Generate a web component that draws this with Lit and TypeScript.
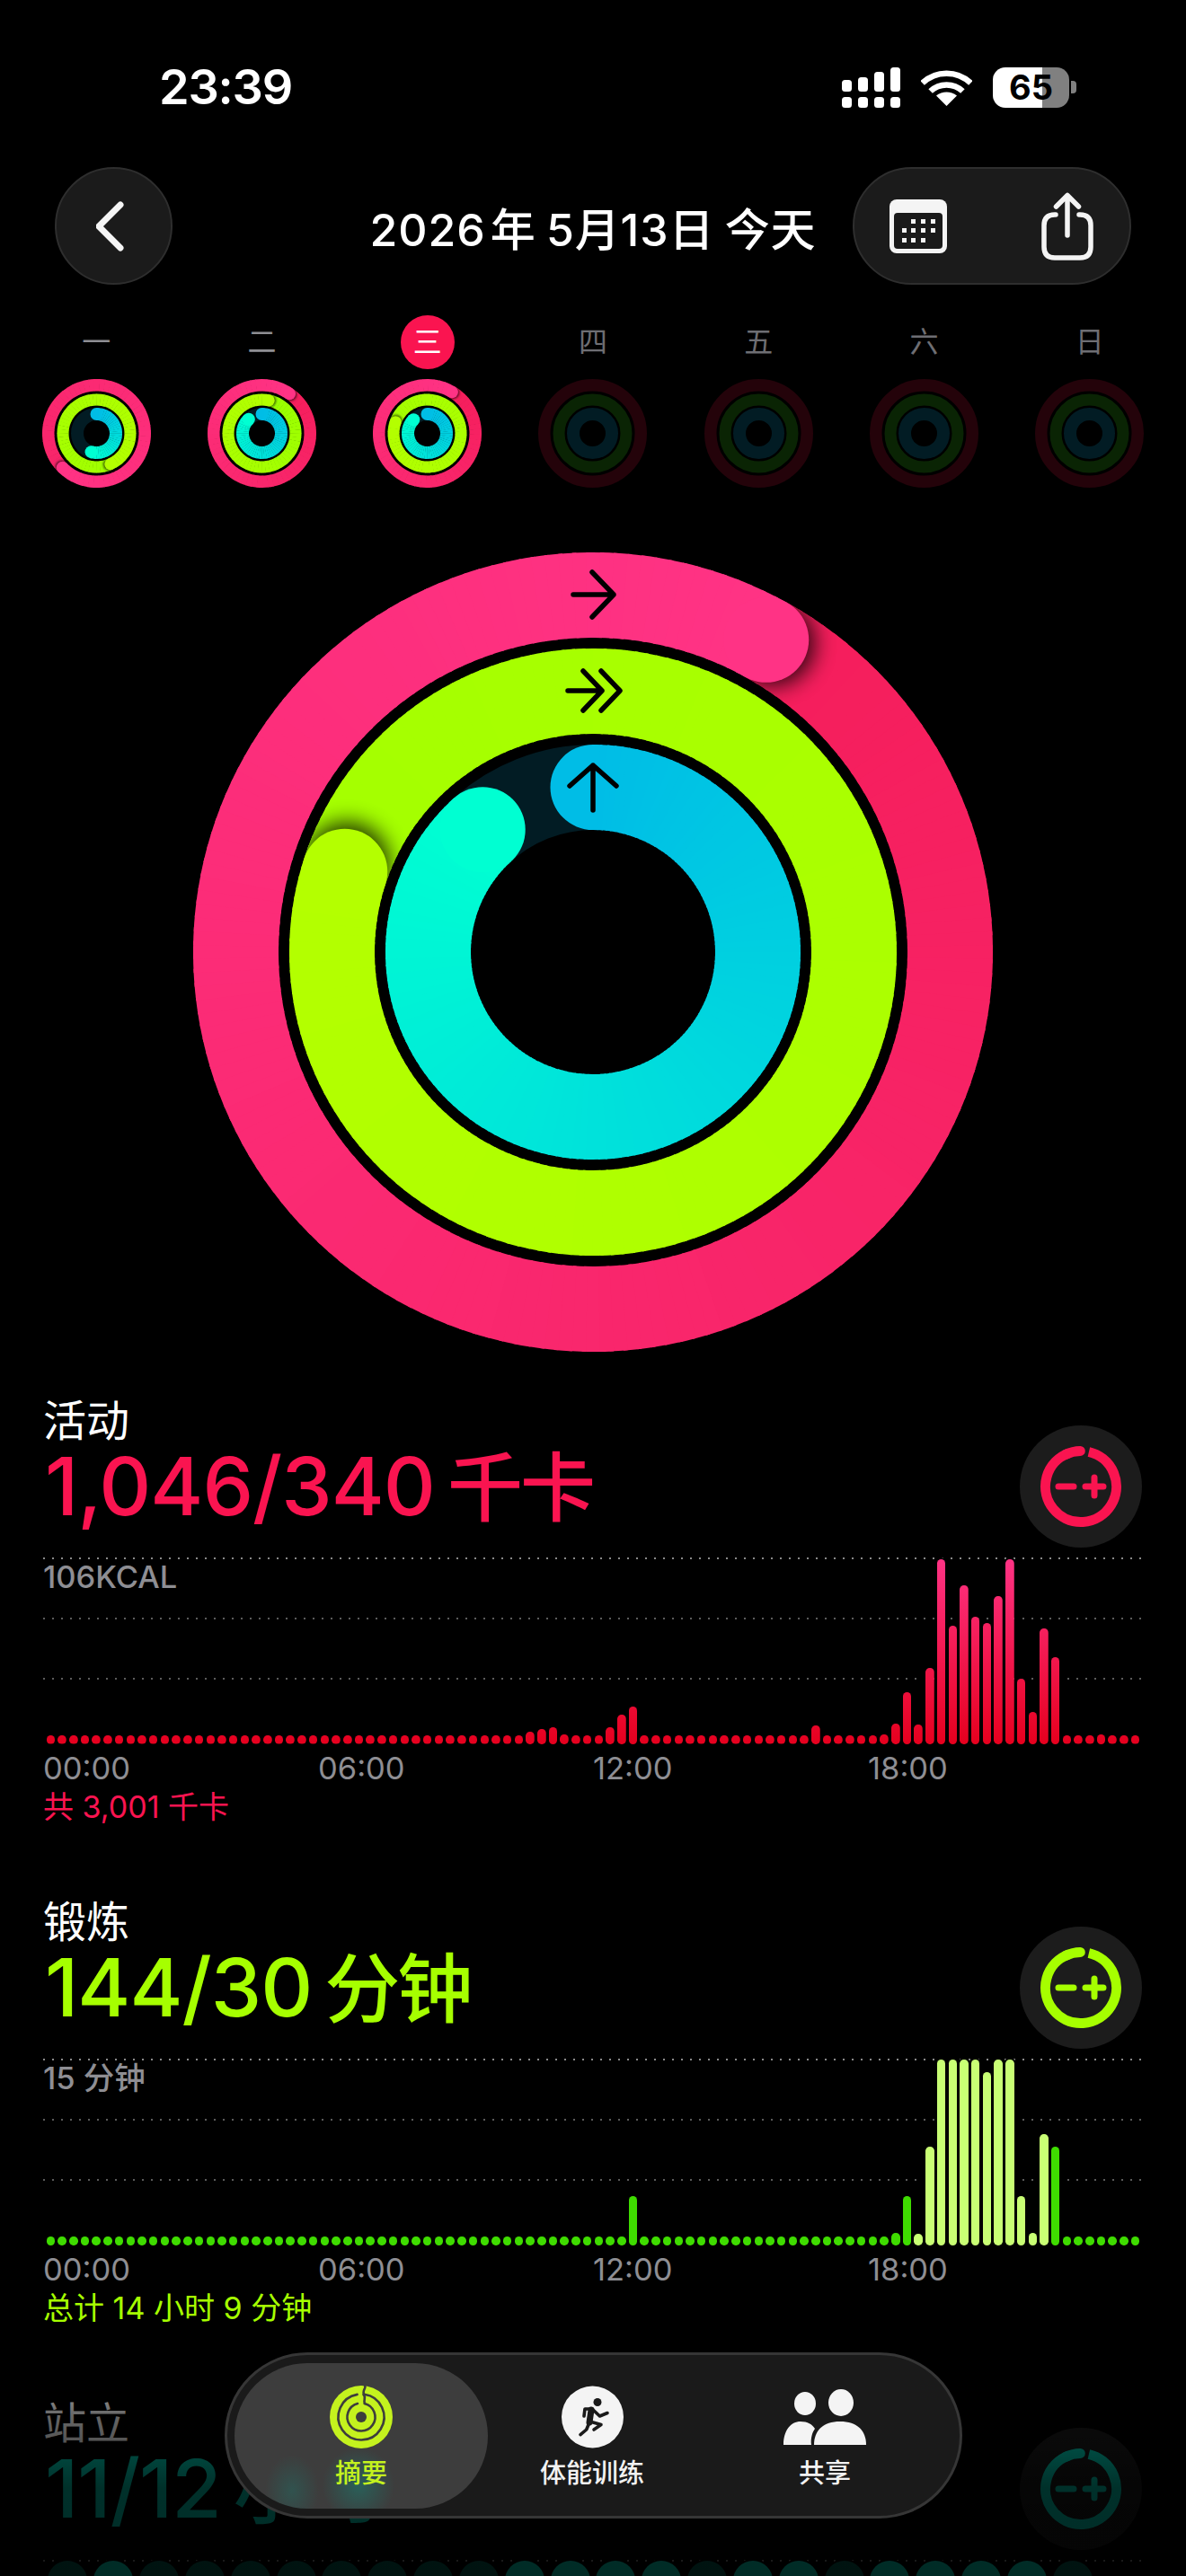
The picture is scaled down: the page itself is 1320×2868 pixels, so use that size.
import { LitElement, css, html, svg } from 'lit';
import { customElement, property } from 'lit/decorators.js';

type Ring = { r: number; w: number; from: string; to: string; track: string; angle: number };
type Bar = { h: number; tone: string };

const RED = { from: '#f41c58', to: '#ff3385', track: '#24030a' };
const GREEN = { from: '#98ff00', to: '#b4ff00', track: '#0a2404' };
const CYAN = { from: '#00bde6', to: '#00ffd2', track: '#021c24' };

const pt = (c: number, r: number, a: number) => {
  const t = ((a - 90) * Math.PI) / 180;
  return [c + r * Math.cos(t), c + r * Math.sin(t)];
};

const arc = (c: number, r: number, a0: number, a1: number) => {
  const [x0, y0] = pt(c, r, a0);
  const [x1, y1] = pt(c, r, a1);
  return `M${x0} ${y0}A${r} ${r} 0 ${a1 - a0 > 180 ? 1 : 0} 1 ${x1} ${y1}`;
};

const mix = (a: string, b: string, t: number) => {
  const ch = (s: string, i: number) => parseInt(s.slice(i, i + 2), 16);
  const part = (i: number) => Math.round(ch(a, i) + (ch(b, i) - ch(a, i)) * t);
  return `rgb(${part(1)},${part(3)},${part(5)})`;
};

const miniRings = (red: number, green: number, cyan: number): Ring[] => [
  { r: 53.75, w: 13.5, ...RED, angle: red },
  { r: 37.5, w: 13, ...GREEN, angle: green },
  { r: 21.5, w: 14, ...CYAN, angle: cyan },
];

const bigRings: Ring[] = [
  { r: 397.5, w: 95, ...RED, angle: 389 },
  { r: 290.5, w: 95, ...GREEN, angle: 648 },
  { r: 183.5, w: 95, ...CYAN, angle: 318 },
];

@customElement('activity-rings')
class ActivityRings extends LitElement {
  static styles = css`
    :host {
      display: block;
    }
    svg {
      display: block;
    }
  `;

  @property({ type: Number }) size = 121;
  @property({ attribute: false }) rings: Ring[] = [];

  renderRing(ring: Ring, i: number, c: number, step: number) {
    const { r, w, from, to, track, angle } = ring;
    const parts = [];
    parts.push(svg`<circle cx=${c} cy=${c} r=${r} fill="none" stroke=${track} stroke-width=${w} />`);
    if (angle === 0) return parts;

    const scale = w / 95;
    const lastLap = Math.max(0, angle - 360);
    const split = angle - 40;
    const seg = (a: number) => svg`<path d=${arc(c, r, a, Math.min(a + step + 0.6, angle))} fill="none"
      stroke=${mix(from, to, a / angle)} stroke-width=${w} />`;

    if (angle < 360) {
      const [sx, sy] = pt(c, r, 0);
      parts.push(svg`<circle cx=${sx} cy=${sy} r=${w / 2} fill=${from} />`);
    }
    for (let a = lastLap; a < split; a += step) parts.push(seg(a));

    if (angle >= 360) {
      const outer = r + w / 2;
      const inner = r - w / 2;
      const hoop = (q: number) => `M${c - q} ${c}A${q} ${q} 0 1 1 ${c + q} ${c}A${q} ${q} 0 1 1 ${c - q} ${c}Z`;
      const [hx, hy] = pt(c, r, angle + ((8 * scale) / r) * 57.3);
      parts.push(svg`
        <clipPath id=${`hoop${i}`}><path clip-rule="evenodd" d=${hoop(outer) + hoop(inner)} /></clipPath>
        <g clip-path=${`url(#hoop${i})`}>
          <circle cx=${hx} cy=${hy} r=${w / 2} fill="#000" opacity="0.8" filter="url(#soft)" />
        </g>`);
    }
    for (let a = lastLap + Math.ceil((split - lastLap) / step) * step; a < angle; a += step) parts.push(seg(a));

    const [hx, hy] = pt(c, r, angle);
    parts.push(svg`<circle cx=${hx} cy=${hy} r=${w / 2} fill=${to} />`);
    return parts;
  }

  render() {
    const c = this.size / 2;
    const step = this.size > 400 ? 2 : 6;
    return html`
      <svg width=${this.size} height=${this.size} viewBox="0 0 ${this.size} ${this.size}">
        <defs>
          <filter id="soft" x="-100%" y="-100%" width="300%" height="300%">
            <feGaussianBlur stdDeviation=${this.size * 0.013} />
          </filter>
        </defs>
        ${this.rings.map((ring, i) => this.renderRing(ring, i, c, step))}
      </svg>
    `;
  }
}

@customElement('metric-section')
class MetricSection extends LitElement {
  static styles = css`
    :host {
      display: block;
      height: 558px;
      padding: 0 49px 0 48px;
      box-sizing: border-box;
      font-family: Inter, 'Noto Sans CJK SC', sans-serif;
    }
    .red {
      --accent: #fa1450;
    }
    .green {
      --accent: #a6ff00;
    }
    .cyan {
      --accent: #00f0d2;
    }
    .header {
      display: flex;
      justify-content: space-between;
      align-items: flex-start;
      margin-bottom: 11px;
    }
    .title {
      font-size: 48px;
      line-height: 47px;
      color: #fff;
    }
    .value {
      font-size: 90px;
      line-height: 100px;
      font-weight: 500;
      letter-spacing: -1px;
      word-spacing: -9px;
      color: var(--accent);
      white-space: nowrap;
      margin-left: 2px;
    }
    .unit {
      font-size: 84px;
      letter-spacing: -3px;
    }
    .edit {
      width: 136px;
      height: 136px;
      margin-top: 29px;
      display: flex;
      align-items: center;
      justify-content: center;
      border-radius: 50%;
      background: #1c1c1c;
      color: var(--accent);
    }
    .chart {
      display: grid;
      height: 208px;
    }
    .chart > * {
      grid-area: 1 / 1;
    }
    .lines {
      display: flex;
      flex-direction: column;
      gap: 65px;
    }
    .line {
      height: 2px;
      background-image: repeating-linear-gradient(90deg, #5c5c5c 0 2px, transparent 2px 10px);
    }
    .line:first-child {
      background-image: repeating-linear-gradient(90deg, #8a8a8a 0 2px, transparent 2px 10px);
    }
    .scale {
      margin-top: 6px;
      font-size: 34.5px;
      line-height: 32px;
      font-weight: 500;
      color: #8e8e93;
    }
    .bars {
      display: grid;
      grid-template-columns: repeat(var(--cols), 1fr);
      align-items: end;
      width: 1220px;
      margin-left: 2px;
    }
    .bar {
      justify-self: center;
      width: var(--bar);
      border-radius: calc(var(--bar) / 2);
      box-shadow: 0 0 0 2px #000;
    }
    .hot {
      background: linear-gradient(to top, #e6001e, #ff3385) bottom / 100% 207px no-repeat;
    }
    .low {
      background: #3fdc00;
    }
    .high {
      background: #c9ff74;
    }
    .dim {
      background: #00695a;
    }
    .on {
      background: #00f0d2;
    }
    .axis {
      display: grid;
      grid-template-columns: repeat(4, 306px);
      margin-top: 9px;
      font-size: 34.5px;
      line-height: 36px;
      color: #8e8e93;
    }
    .total {
      margin-top: 7px;
      font-size: 34px;
      line-height: 36px;
      color: var(--accent);
    }
  `;

  @property() label = '';
  @property() amount = '';
  @property() unit = '';
  @property() tone = 'red';
  @property() scale = '';
  @property() total = '';
  @property({ type: Number }) barWidth = 9.5;
  @property({ attribute: false }) bars: Bar[] = [];

  render() {
    return html`
      <div class=${this.tone}>
        <div class="header">
          <div>
            <div class="title">${this.label}</div>
            <div class="value">${this.amount} <span class="unit">${this.unit}</span></div>
          </div>
          <div class="edit">
            <svg width="92" height="92" viewBox="0 0 92 92" fill="none" stroke="currentColor">
              <path d=${arc(46, 39.5, 13, 340)} stroke-width="11" />
              <path d=${arc(46, 39.5, 335, 359)} stroke-width="11" stroke-linecap="round" />
              <path d="M21 46H38M51 46H71M61 36V56" stroke-width="7" stroke-linecap="round" />
            </svg>
          </div>
        </div>
        <div class="chart">
          <div class="lines"><div class="line"></div><div class="line"></div><div class="line"></div></div>
          <div class="bars" style="--cols:${this.bars.length};--bar:${this.barWidth}px">
            ${this.bars.map((b) => html`<div class="bar ${b.tone}" style="height:${b.h}px"></div>`)}
          </div>
          <div class="scale">${this.scale}</div>
        </div>
        <div class="axis"><span>00:00</span><span>06:00</span><span>12:00</span><span>18:00</span></div>
        <div class="total">${this.total}</div>
      </div>
    `;
  }
}

const DOT = 9.5;

const redHeights: Record<number, number> = {
  42: 14, 43: 17, 44: 19, 45: 11, 49: 19, 50: 33, 51: 42, 67: 21, 73: 11, 74: 23, 75: 58, 76: 22, 77: 85,
  78: 206, 79: 132, 80: 177, 81: 142, 82: 135, 83: 165, 84: 206, 85: 73, 86: 36, 87: 129, 88: 97, 92: 11,
};
const redBars: Bar[] = Array.from({ length: 96 }, (_, i) => ({ h: redHeights[i] ?? DOT, tone: 'hot' }));

const greenHeights: Record<number, number> = { 51: 55, 74: 14, 75: 55, 88: 110 };
const goalHeights: Record<number, number> = {
  76: 13, 77: 110, 78: 207, 79: 207, 80: 207, 81: 207, 82: 193, 83: 207, 84: 207, 85: 55, 86: 14, 87: 124,
};
const greenBars: Bar[] = Array.from({ length: 96 }, (_, i) =>
  goalHeights[i] ? { h: goalHeights[i], tone: 'high' } : { h: greenHeights[i] ?? DOT, tone: 'low' }
);

const standHours = [1, 10, 11, 12, 13, 15, 16, 18, 19, 20, 21];
const standBars: Bar[] = Array.from({ length: 24 }, (_, i) => ({
  h: i === 23 ? 0 : 207,
  tone: standHours.includes(i) ? 'on' : 'dim',
}));

const week = [
  { day: '一', rings: miniRings(585, 516, 196) },
  { day: '二', rings: miniRings(395, 372, 317) },
  { day: '三', rings: miniRings(391, 650, 315), today: true },
  { day: '四', rings: miniRings(0, 0, 0) },
  { day: '五', rings: miniRings(0, 0, 0) },
  { day: '六', rings: miniRings(0, 0, 0) },
  { day: '日', rings: miniRings(0, 0, 0) },
];

@customElement('app-root')
class AppRoot extends LitElement {
  static styles = css`
    :host {
      display: block;
      position: relative;
      width: 1320px;
      height: 2868px;
      overflow: hidden;
      background: #000;
      color: #fff;
      font-family: Inter, 'Noto Sans CJK SC', sans-serif;
    }
    .status {
      display: flex;
      justify-content: space-between;
      align-items: center;
      height: 66px;
      padding: 64px 122px 0 177px;
    }
    .time {
      font-size: 54px;
      font-weight: 600;
      line-height: 66px;
      letter-spacing: -1.2px;
    }
    .status-icons {
      display: flex;
      align-items: center;
      gap: 23px;
    }
    .battery {
      display: flex;
      align-items: center;
      gap: 2px;
    }
    .battery-body {
      width: 85px;
      height: 45px;
      border-radius: 14px;
      background: linear-gradient(90deg, #fff 0 55px, #808080 55px);
      color: #000;
      font-size: 38px;
      font-weight: 700;
      line-height: 45px;
      text-align: center;
    }
    .battery-nub {
      width: 6px;
      height: 14px;
      border-radius: 0 4px 4px 0;
      background: #808080;
    }
    .nav {
      display: grid;
      grid-template-columns: 1fr auto 1fr;
      align-items: center;
      margin-top: 56px;
      padding: 0 61px;
    }
    .glass {
      box-sizing: border-box;
      height: 131px;
      border-radius: 66px;
      background: #1b1b1b;
      border: 2px solid #2e2e2e;
      display: flex;
      align-items: center;
    }
    .back {
      width: 131px;
      justify-content: center;
    }
    .date {
      font-size: 50px;
      font-weight: 500;
      white-space: nowrap;
      letter-spacing: 0.9px;
      word-spacing: -3px;
    }
    .thin {
      word-spacing: -9px;
    }
    .tools {
      width: 310px;
      justify-self: end;
      justify-content: space-between;
      padding: 0 39px;
    }
    .week {
      display: grid;
      grid-template-columns: repeat(7, 1fr);
      width: 1290px;
      margin: 34px 0 0 15px;
    }
    .day {
      display: flex;
      flex-direction: column;
      align-items: center;
      gap: 11px;
    }
    .day-name {
      width: 60px;
      height: 60px;
      border-radius: 50%;
      font-size: 32px;
      line-height: 60px;
      text-align: center;
      color: #8e8e93;
    }
    .future {
      color: #6e6e73;
    }
    .today {
      background: #fa1450;
      color: #fff;
    }
    .goal {
      display: grid;
      width: 890px;
      margin: 72px auto 52.5px;
    }
    .goal > * {
      grid-area: 1 / 1;
    }
    .fade {
      position: absolute;
      left: 0;
      right: 0;
      top: 2590px;
      bottom: 0;
      pointer-events: none;
      background: linear-gradient(
        to bottom,
        rgba(0, 0, 0, 0) 0,
        rgba(0, 0, 0, 0.6) 100px,
        rgba(0, 0, 0, 0.8) 180px,
        rgba(0, 0, 0, 0.82) 278px
      );
    }
    .tabs {
      position: absolute;
      left: 250px;
      top: 2619px;
      width: 821px;
      height: 185px;
      box-sizing: border-box;
      padding: 9px 8px;
      border: 3px solid #363636;
      border-radius: 93px;
      background: #1a1a1a;
      display: grid;
      grid-template-columns: 282px 232px 286px;
    }
    .tab {
      display: flex;
      flex-direction: column;
      align-items: center;
      gap: 11px;
      height: 162px;
      box-sizing: border-box;
      padding-top: 25px;
      border-radius: 81px;
      font-size: 29px;
      font-weight: 500;
      line-height: 34px;
      color: #f2f2f2;
    }
    .active {
      color: #c4f21e;
      background:
        radial-gradient(ellipse 30px 40px at 64px 142px, rgba(0, 170, 150, 0.2), transparent),
        radial-gradient(ellipse 40px 42px at 138px 136px, rgba(0, 170, 150, 0.32), transparent),
        #3d3d3d;
    }
    svg {
      display: block;
    }
  `;

  render() {
    return html`
      <div class="status">
        <div class="time">23:39</div>
        <div class="status-icons">
          <svg width="65" height="45" viewBox="0 0 65 45" fill="#fff">
            <rect x="0" y="14" width="11" height="13" rx="3.5" />
            <rect x="18" y="11" width="11" height="16" rx="3.5" />
            <rect x="36" y="5" width="11" height="22" rx="3.5" />
            <rect x="54" y="0" width="11" height="27" rx="3.5" />
            <rect x="0" y="33" width="11" height="12" rx="3.5" />
            <rect x="18" y="33" width="11" height="12" rx="3.5" />
            <rect x="36" y="33" width="11" height="12" rx="3.5" />
            <rect x="54" y="33" width="11" height="12" rx="3.5" />
          </svg>
          <svg width="57" height="41" viewBox="0 0 57 41" fill="none" stroke="#fff" stroke-width="6.5">
            <path d="M1.6 15.5C16.5 1 40.5 1 55.4 15.5" />
            <path d="M10.6 24.5C20.5 15 36.5 15 46.4 24.5" />
            <path d="M28.5 41L17 29.5C23.5 24 33.5 24 40 29.5Z" fill="#fff" stroke="none" />
          </svg>
          <div class="battery">
            <div class="battery-body">65</div>
            <div class="battery-nub"></div>
          </div>
        </div>
      </div>

      <div class="nav">
        <div class="glass back">
          <svg width="40" height="62" viewBox="0 0 40 62" fill="none" stroke="#f5f5f5" stroke-width="7" stroke-linecap="round" stroke-linejoin="round">
            <path d="M27 7L3 31L27 55" />
          </svg>
        </div>
        <div class="date">2026<span class="thin"> </span>年 5月13日 今天</div>
        <div class="glass tools">
          <svg width="64" height="60" viewBox="0 0 64 60">
            <rect width="64" height="60" rx="8" fill="#f4f4f4" />
            <rect x="5" y="15" width="54" height="40" rx="4" fill="#1a1a1a" />
            <g fill="#f4f4f4">
              <rect x="24" y="22" width="5" height="5" /><rect x="35" y="22" width="5" height="5" /><rect x="46" y="22" width="5" height="5" />
              <rect x="14" y="32" width="5" height="5" /><rect x="24" y="32" width="5" height="5" /><rect x="35" y="32" width="5" height="5" /><rect x="46" y="32" width="5" height="5" />
              <rect x="14" y="43" width="5" height="5" /><rect x="24" y="43" width="5" height="5" /><rect x="35" y="43" width="5" height="5" />
            </g>
          </svg>
          <svg width="60" height="76" viewBox="0 0 60 76" fill="none" stroke="#f4f4f4" stroke-width="5.5" stroke-linecap="round" stroke-linejoin="round">
            <path d="M17 25H16C8 25 4 29 4 37V61C4 69 8 73 16 73H44C52 73 56 69 56 61V37C56 29 52 25 44 25H43" />
            <path d="M30 48V4M17.5 16L30 3.5L42.5 16" />
          </svg>
        </div>
      </div>

      <div class="week">
        ${week.map(
          (d, i) => html`
            <div class="day">
              <div class="day-name ${d.today ? 'today' : i > 2 ? 'future' : ''}">${d.day}</div>
              <activity-rings .size=${121} .rings=${d.rings}></activity-rings>
            </div>
          `
        )}
      </div>

      <div class="goal">
        <activity-rings .size=${890} .rings=${bigRings}></activity-rings>
        <svg width="890" height="890" viewBox="215 615 890 890" fill="none" stroke="#000" stroke-width="5.5" stroke-linecap="round" stroke-linejoin="round">
          <path d="M638 662H683M659 637L683 662L659 687" />
          <path d="M632 769H670M649 747L670 769L649 791M669 747L690 769L669 791" />
          <path d="M660 902V852M634 875L660 852L686 875" />
        </svg>
      </div>

      <metric-section label="活动" amount="1,046/340" unit="千卡" tone="red" scale="106KCAL" total="共 3,001 千卡" .bars=${redBars}></metric-section>
      <metric-section label="锻炼" amount="144/30" unit="分钟" tone="green" scale="15 分钟" total="总计 14 小时 9 分钟" .bars=${greenBars}></metric-section>
      <metric-section label="站立" amount="11/12" unit="小时" tone="cyan" .barWidth=${44} .bars=${standBars}></metric-section>

      <div class="fade"></div>

      <div class="tabs">
        <div class="tab active">
          <svg width="70" height="70" viewBox="0 0 70 70">
            <circle cx="35" cy="35" r="35" fill="#c4f21e" />
            <g fill="none" stroke="#3d3d3d" stroke-width="2.6" stroke-linecap="round">
              <path d=${arc(35, 25.5, 8, 350)} />
              <path d=${arc(35, 15.5, 14, 345)} />
              <path d="M39 0C41 3 36 5 38 9.5" />
              <path d="M37.5 10C41 13 37 16 39 20" />
            </g>
            <circle cx="35" cy="35" r="6" fill="#3d3d3d" />
          </svg>
          <span>摘要</span>
        </div>
        <div class="tab">
          <svg width="69" height="70" viewBox="0 0 69 70">
            <circle cx="34.5" cy="35" r="34.5" fill="#f4f4f4" />
            <circle cx="40" cy="18.5" r="4.5" fill="#1a1a1a" />
            <g fill="none" stroke="#1a1a1a" stroke-linecap="round" stroke-linejoin="round">
              <path d="M33 27L31 41" stroke-width="7" />
              <path d="M33 26H26L25 34M34 26L42.5 34L51 30.5M31.5 40L44 43.5L36 49M31 41L27.7 49L21 54.7" stroke-width="3.6" />
            </g>
          </svg>
          <span>体能训练</span>
        </div>
        <div class="tab">
          <svg width="92" height="70" viewBox="0 0 92 70" fill="#f4f4f4">
            <ellipse cx="24" cy="20" rx="12" ry="13" />
            <ellipse cx="64" cy="19" rx="14" ry="15" />
            <path d="M0 66C0 50 8 40 19 40C27 40 32 43 35 48C32 52 30 59 31 66Z" />
            <path d="M34 66C34 50 44 40 63 40C82 40 92 50 92 66Z" />
          </svg>
          <span>共享</span>
        </div>
      </div>
    `;
  }
}

export { ActivityRings, MetricSection, AppRoot };
